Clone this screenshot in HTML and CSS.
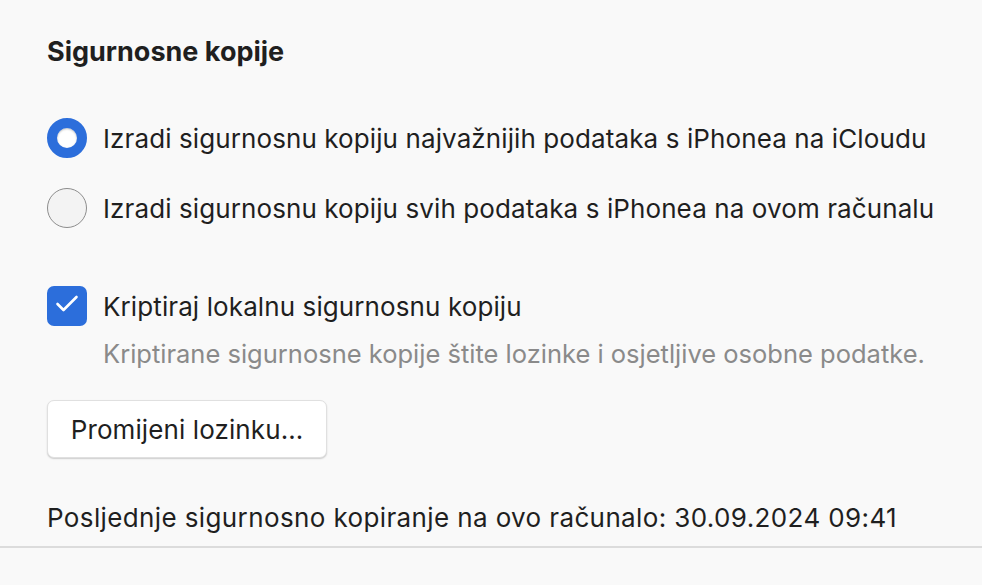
FILE: index.html
```html
<!DOCTYPE html>
<html lang="hr">
<head>
    <meta charset="UTF-8">
    <meta name="viewport" content="width=device-width, initial-scale=1.0">
    <title>Sigurnosne kopije</title>
    <link rel="stylesheet" href="styles.css">
</head>
<body>
    <div class="panel">
        <h2 class="title">Sigurnosne kopije</h2>

        <div class="options">
            <label class="row">
                <span class="radio checked"></span>
                <span>Izradi sigurnosnu kopiju najvažnijih podataka s iPhonea na iCloudu</span>
            </label>
            <label class="row">
                <span class="radio"></span>
                <span>Izradi sigurnosnu kopiju svih podataka s iPhonea na ovom računalu</span>
            </label>
        </div>

        <label class="row encrypt">
            <span class="checkbox">
                <svg width="40" height="40" viewBox="0 0 40 40">
                    <path d="M10.5 18 L16.5 24 L29.5 11" fill="none" stroke="#fff" stroke-width="2.6" stroke-linecap="round" stroke-linejoin="round"/>
                </svg>
            </span>
            <span>Kriptiraj lokalnu sigurnosnu kopiju</span>
        </label>
        <p class="hint">Kriptirane sigurnosne kopije štite lozinke i osjetljive osobne podatke.</p>

        <button class="btn">Promijeni lozinku…</button>

        <p class="last">Posljednje sigurnosno kopiranje na ovo računalo: 30.09.2024 09:41</p>
    </div>
    <div class="divider"></div>
</body>
</html>
```
FILE: styles.css
```css
* {
    margin: 0;
    padding: 0;
    box-sizing: border-box;
}
body {
    background: #f9f9f9;
    color: #1f1f1f;
    font-family: 'Inter', 'Liberation Sans', sans-serif;
    font-size: 26px;
    letter-spacing: 0.1px;
    height: 585px;
    overflow: hidden;
}
.panel {
    padding: 36px 47px 0;
    white-space: nowrap;
}
.title {
    font-size: 27px;
    font-weight: 700;
    line-height: 32px;
    letter-spacing: 0;
}
.options {
    display: flex;
    flex-direction: column;
    gap: 30px;
    margin-top: 50px;
}
.row {
    display: flex;
    align-items: center;
    gap: 16px;
    height: 40px;
}
.radio {
    width: 40px;
    height: 40px;
    border-radius: 50%;
    border: 1.5px solid #8d8d8d;
    background: #f3f3f3;
    flex-shrink: 0;
}
.radio.checked {
    border: 10px solid #2c6edb;
    background: #fff;
    box-shadow: inset 0 1px 2px rgba(0, 0, 0, 0.25);
}
.encrypt {
    margin-top: 58px;
}
.checkbox {
    width: 40px;
    height: 40px;
    border-radius: 7px;
    background: #2c6edb;
    flex-shrink: 0;
    display: flex;
}
.hint {
    color: #8a8a8a;
    font-size: 25.5px;
    letter-spacing: 0;
    line-height: 32px;
    margin: 12px 0 0 56px;
}
.btn {
    display: block;
    margin-top: 30px;
    width: 280px;
    height: 58px;
    background: #fff;
    border: 1px solid #e0e0e0;
    border-radius: 7px;
    box-shadow: 0 1px 1.5px rgba(0, 0, 0, 0.18);
    font-family: inherit;
    font-size: 26px;
    letter-spacing: 0.1px;
    color: #1f1f1f;
}
.last {
    line-height: 32px;
    margin-top: 44px;
    letter-spacing: 0.38px;
}
.divider {
    height: 2px;
    background: #dcdcdc;
    margin-top: 12px;
}
```
